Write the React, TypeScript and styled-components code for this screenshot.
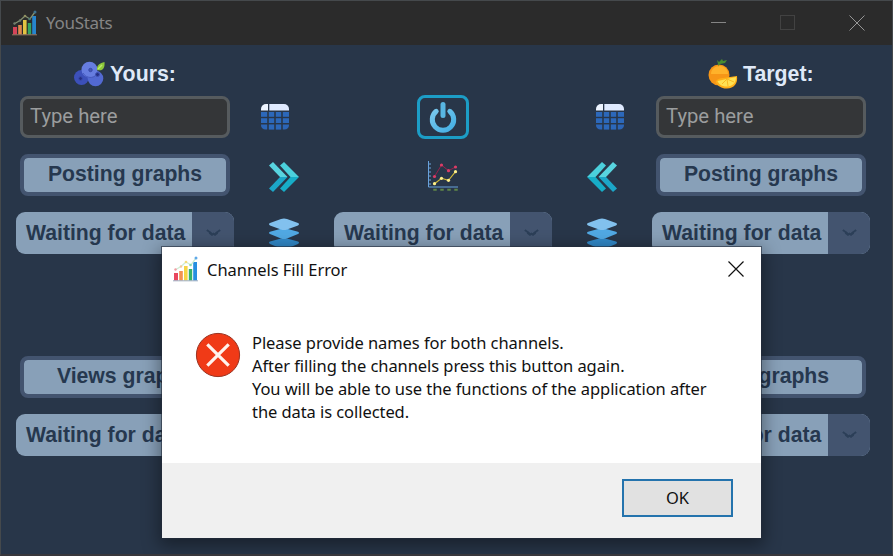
import React from "react";
import styled, { createGlobalStyle } from "styled-components";

const GlobalStyle = createGlobalStyle`
  * { box-sizing: border-box; }
  body { margin: 0; background: #283649; overflow: hidden; }
`;

const Window = styled.div`
  position: relative;
  width: 893px;
  height: 556px;
  display: flex;
  flex-direction: column;
  background: #283649;
  border: 1px solid #45494c;
  border-bottom: 2px solid #38373c;
  overflow: hidden;
`;

const TitleBar = styled.header`
  flex: none;
  height: 44px;
  display: flex;
  align-items: center;
  padding-left: 11px;
  background: #2b2b2b;
  color: #858585;
`;

const AppName = styled.span`
  flex: 1;
  margin-left: 9px;
  font: 17px/24px "Noto Sans", sans-serif;
  letter-spacing: -0.3px;
`;

const WindowButtons = styled.div`
  display: flex;
  align-items: center;
  gap: 54px;
  padding-right: 27px;
  line-height: 0;
`;

const Board = styled.main`
  display: grid;
  grid-template-columns: 218px 100px 218px 100px 218px;
  grid-template-rows: 35px 42px 42px 42px 70px 42px 42px;
  row-gap: 16px;
  padding: 0 0 0 15px;
`;

const Heading = styled.h2<{ $shift: number }>`
  margin: 11px 0 -8px;
  height: 35px;
  display: flex;
  align-items: center;
  padding-left: ${(p) => p.$shift}px;
  gap: 5px;
  color: #dfe9f8;
  font: bold 21.3px/30px "Liberation Sans", Arial, sans-serif;
`;

const NameInput = styled.input`
  width: 210px;
  height: 42px;
  margin: 0 4px;
  padding: 0 7px 2px;
  border: 3px solid #565b5e;
  border-radius: 8px;
  background: #343638;
  outline: none;
  font: 20.3px "Roboto", sans-serif;
  &::placeholder { color: #9b9d9e; opacity: 1; }
`;

const GraphButton = styled.button`
  width: 210px;
  height: 42px;
  margin: 0 4px;
  padding: 0 0 2px;
  border: 4px solid #43546f;
  border-radius: 8px;
  background: linear-gradient(#88a0b8, #88a0b8) padding-box, #43546f;
  color: #26384f;
  font: bold 21.2px/32px "Liberation Sans", Arial, sans-serif;
  white-space: nowrap;
`;

const Select = styled.div`
  height: 42px;
  display: flex;
  border-radius: 9px;
  overflow: hidden;
  background: #88a0b8;
  color: #26384f;
`;

const SelectText = styled.span`
  width: 176px;
  padding-left: 10px;
  font: bold 21.2px/41px "Liberation Sans", Arial, sans-serif;
  white-space: nowrap;
`;

const SelectArrow = styled.span`
  flex: 1;
  display: flex;
  align-items: center;
  justify-content: center;
  background: #43546f;
`;

const IconCell = styled.div<{ $before?: number; $after?: number }>`
  display: flex;
  align-items: center;
  justify-content: center;
  padding-left: ${(p) => p.$before ?? 0}px;
  padding-right: ${(p) => p.$after ?? 0}px;
  padding-top: 3px;
`;

const TableCell = styled(IconCell)`
  padding-top: 0;
`;

const LayersCell = styled(IconCell)`
  padding-top: 1px;
`;

const PowerButton = styled.button`
  width: 52px;
  height: 44px;
  margin: -1px auto;
  padding: 0;
  display: flex;
  align-items: center;
  justify-content: center;
  border: 3px solid #1c9dc6;
  border-radius: 8px;
  background: transparent;
`;

const Dialog = styled.section`
  position: absolute;
  left: 161px;
  top: 246px;
  width: 599px;
  height: 291px;
  display: flex;
  flex-direction: column;
  background: #fff;
  box-shadow: 0 0 0 1px rgba(35, 44, 58, 0.6), 0 5px 16px 3px rgba(0, 0, 0, 0.38);
  color: #111;
  font-family: "Noto Sans", sans-serif;
`;

const DialogTitle = styled.div`
  height: 46px;
  display: flex;
  align-items: center;
  padding: 0 17px 3px 11px;
`;

const DialogName = styled.span`
  flex: 1;
  margin: 3px 0 0 9px;
  font-size: 16.5px;
  line-height: 24px;
  letter-spacing: -0.03px;
`;

const DialogBody = styled.div`
  flex: 1;
  display: flex;
  padding: 39px 0 0 33px;
`;

const Message = styled.p`
  margin: -1px 0 0 11px;
  font-size: 16.5px;
  line-height: 23px;
  letter-spacing: -0.07px;
  white-space: nowrap;
`;

const DialogFooter = styled.footer`
  height: 75px;
  padding: 16px 28px;
  display: flex;
  justify-content: flex-end;
  background: #f0f0f0;
`;

const OkButton = styled.button`
  width: 111px;
  height: 38px;
  padding: 0;
  border: 2px solid #2473ad;
  background: #e1e1e1;
  color: #111;
  font: 16.5px/32px "Noto Sans", sans-serif;
`;

const BarsIcon = ({ dim }: { dim?: boolean }) => (
  <svg width="25" height="26" viewBox="0 0 25 26">
    <g opacity={dim ? 0.9 : 1}>
      <rect x="1" y="17" width="4" height="7.5" fill="#e9475f" />
      <rect x="6.200" y="15" width="3.600" height="9.500" fill="#f39252" />
      <rect x="11" y="10" width="3.600" height="14.500" fill="#f6d545" />
      <rect x="15.800" y="13" width="3.400" height="11.500" fill="#35b269" />
      <rect x="20.200" y="6" width="3.800" height="18.500" fill="#268fe0" />
      <path d="M0 24.800h25" stroke={dim ? "#a5826c" : "#9cabc0"} strokeWidth="1" />
      <path d="M2 14 8 10.500 13 6l5 3 5-7" fill="none" stroke={dim ? "#8f9d78" : "#cdeed4"} strokeWidth="1.300" />
      <circle cx="2.500" cy="13.500" r="1.200" fill={dim ? "#778675" : "#f29ba3"} />
      <circle cx="8" cy="10.500" r="1.200" fill={dim ? "#778675" : "#f4c59b"} />
      <circle cx="13" cy="6" r="1.300" fill={dim ? "#9a9a66" : "#f3db7c"} />
      <circle cx="17.500" cy="9" r="1.300" fill={dim ? "#55857c" : "#8ed9ae"} />
      <circle cx="23" cy="2" r="1.500" fill={dim ? "#417a9c" : "#5fa8e8"} />
    </g>
  </svg>
);

const Blueberries = () => (
  <svg width="31" height="26" viewBox="0 0 31 26">
    <circle cx="7.500" cy="16.500" r="7.500" fill="#3c50ba" />
    <circle cx="21.500" cy="17.500" r="7.800" fill="#5269d2" />
    <circle cx="15.500" cy="8.700" r="8" fill="#667de0" />
    <path d="M9 12c2 4 8 6 12 3" fill="none" stroke="#4659bd" strokeWidth="1" />
    <circle cx="6.500" cy="17.500" r="1.900" fill="#242f83" stroke="#3b4db0" />
    <circle cx="16.500" cy="9" r="1.700" fill="#4457b6" stroke="#374aa8" />
    <circle cx="23.500" cy="13.500" r="2" fill="#253086" stroke="#4053b2" />
    <path d="M23 9C22.500 4 26 2 30.500 1c.5 6-1.500 9.500-7.500 8Z" fill="#8cc83b" />
    <path d="m24 8 4-4" stroke="#bcea67" strokeWidth="1.500" />
  </svg>
);

const Orange = () => (
  <svg width="30" height="30" viewBox="0 0 30 30">
    <circle cx="11" cy="16" r="10.500" fill="#f79617" />
    <path d="M3 15c0-5 4-8 9-8 5 0 8 4 8 8" fill="#ffb22a" />
    <path d="M10.500 7 9 1l2 2 3-3 1 2 4-1-2 3-5 1-2 3Z" fill="#498b31" />
    <path d="M7.500 23C9 20 12 19 15 19l14-2c1 8-3 12-10 12.500-5 .3-9-2-11.500-6.500Z" fill="#ffaf18" />
    <path d="m9.500 22 18.500-4c0 6-3 9-9 9.500-5 .2-8-2-9.500-5.500Z" fill="#ffe253" />
    <path d="m19 20-5 5m5-5 1 7m-1-7 7 3" stroke="#f9ba22" strokeWidth="1" />
  </svg>
);

const TableIcon = () => (
  <svg width="28" height="26" viewBox="0 0 28 26">
    <path d="M5 0H7v6.500H0V5a5 5 0 0 1 5-5Z" fill="#edf4ff" />
    <path d="M8.300 0H23a5 5 0 0 1 5 5v1.500H8.300Z" fill="#dfeaff" />
    {[8, 14.2, 20.4].map((y, row) =>
      [0, 7.8, 14.8, 21.8].map((x, col) => {
        const w = col === 0 || col === 3 ? 6.2 : 5.4;
        const h = row === 2 ? 5.2 : 4.8;
        const corner = row === 2 && (col === 0 || col === 3);
        return corner ? (
          <path
            key={`${row}${col}`}
            d={col === 0 ? "M0 20.400H6.200V25.600H4.500A4.500 4.500 0 0 1 0 21Z" : "M28 20.400H21.800V25.600H23.500A4.500 4.500 0 0 0 28 21Z"}
            fill="#2c65b6"
          />
        ) : (
          <rect key={`${row}${col}`} x={x} y={y} width={w} height={h} fill="#2c68ba" />
        );
      })
    )}
  </svg>
);

const Chevrons = ({ left }: { left?: boolean }) => (
  <svg width="30" height="30" viewBox="0 0 30 30">
    <g transform={left ? "translate(30 0) scale(-1 1)" : undefined}>
      <path d="M0 3.500 4 0 18.500 15H11Z" fill="#58d4df" />
      <path d="M11 15h7.500L4 30 0 26.500Z" fill="#1ca6c8" />
      <path d="M11 3.500 15 0 30 15H21.500Z" fill="#4bd0dc" />
      <path d="M21.500 15H30L15 30l-4-3.500Z" fill="#17adc7" />
    </g>
  </svg>
);

const Layers = () => (
  <svg width="30" height="32" viewBox="0 0 30 32">
    <path d="m1 23.500 11-3h6l11 3q2 1.200 0 2.400L18 30.500q-3 1-6 0L1 25.900q-2-1.200 0-2.400Z" fill="#3188c7" />
    <path d="m1 13.700 11-3h6l11 3q2 1.200 0 2.400l-11 4.400q-3 1-6 0L1 16.100q-2-1.200 0-2.400Z" fill="#51a9e4" />
    <path d="M1 5 12 1q3-1 6 0l11 4q2 1.200 0 2.400l-11 4q-3 1-6 0l-11-4Q-1 6.200 1 5Z" fill="#82c1ee" />
  </svg>
);

const Power = () => (
  <svg width="28" height="32" viewBox="0 0 28 32">
    <defs>
      <linearGradient id="power" x1="0" y1="0" x2="1" y2="1">
        <stop stopColor="#78c8ee" />
        <stop offset="1" stopColor="#43afe4" />
      </linearGradient>
    </defs>
    <path d="M7.200 10.300A10.700 10.700 0 1 0 20.800 10.300" fill="none" stroke="url(#power)" strokeWidth="5" strokeLinecap="round" />
    <rect x="11.500" y="1" width="5" height="16" rx="2.500" fill="#58b6e2" />
  </svg>
);

const RED = [[6.5, 15.5], [13.5, 4], [20.5, 9.7], [27.5, 6]];
const YELLOW = [[6.5, 22.7], [13.5, 17.3], [20.5, 19.3], [27.5, 10.7]];

const LineChart = () => (
  <svg width="31" height="31" viewBox="0 0 31 31">
    <path d="M.5 0v26H30M1 3h2M1 7h2M1 11h2M1 15h2M1 19h2M1 23h2" fill="none" stroke="#69a2dc" strokeWidth="1" />
    <path d="M5.500 28.800h3m4 0h3m4 0h3m4 0h3" stroke="#76a848" strokeWidth="2" strokeDasharray="1.200 .6" />
    <polyline points={RED.join(" ")} fill="none" stroke="#98214b" strokeWidth="1" />
    <polyline points={YELLOW.join(" ")} fill="none" stroke="#cfb93a" strokeWidth="1.100" />
    {RED.map(([x, y]) => <circle key={x} cx={x} cy={y} r="1.600" fill="#db3d66" />)}
    {YELLOW.map(([x, y]) => <circle key={x} cx={x} cy={y} r="1.600" fill="#fff08a" />)}
  </svg>
);

const ErrorIcon = () => (
  <svg width="46" height="46" viewBox="0 0 46 46">
    <circle cx="23" cy="23" r="21.600" fill="#f03a17" stroke="#9b3321" strokeWidth="1" />
    <path d="m12.300 12.300 21.400 21.400m0-21.400L12.300 33.700" stroke="#fff3ee" strokeWidth="3.200" />
  </svg>
);

const Cross = ({ color, width = 1 }: { color: string; width?: number }) => (
  <svg width="16" height="16" viewBox="0 0 16 16">
    <path d="m.5.5 15 15m0-15-15 15" stroke={color} strokeWidth={width} />
  </svg>
);

const WaitingSelect = () => (
  <Select>
    <SelectText>Waiting for data</SelectText>
    <SelectArrow>
      <svg width="15" height="8" viewBox="0 0 15 8">
        <path d="m.8 1 4.500 3.200M14.200 1 9.700 4.200" stroke="#2c3f58" strokeWidth="1.800" />
        <path d="m3.500 3.700 2.500 2 1.500-1 1.500 1 2.500-2" fill="none" stroke="#2c3f58" strokeWidth="2.200" />
      </svg>
    </SelectArrow>
  </Select>
);

export default function App() {
  return (
    <Window>
      <GlobalStyle />
      <TitleBar>
        <BarsIcon dim />
        <AppName>YouStats</AppName>
        <WindowButtons>
          <svg width="15" height="16"><path d="M0 7.500h15" stroke="#858585" /></svg>
          <svg width="15" height="16"><rect x=".5" y=".5" width="14" height="14" fill="none" stroke="#424242" /></svg>
          <Cross color="#969696" />
        </WindowButtons>
      </TitleBar>

      <Board>
        <Heading $shift={58}><Blueberries />Yours:</Heading>
        <span /><span /><span />
        <Heading $shift={56}><Orange />Target:</Heading>

        <NameInput placeholder="Type here" />
        <TableCell $after={18}><TableIcon /></TableCell>
        <PowerButton><Power /></PowerButton>
        <TableCell $before={16}><TableIcon /></TableCell>
        <NameInput placeholder="Type here" />

        <GraphButton>Posting graphs</GraphButton>
        <IconCell><Chevrons /></IconCell>
        <IconCell><LineChart /></IconCell>
        <IconCell><Chevrons left /></IconCell>
        <GraphButton>Posting graphs</GraphButton>

        <WaitingSelect />
        <LayersCell><Layers /></LayersCell>
        <WaitingSelect />
        <LayersCell><Layers /></LayersCell>
        <WaitingSelect />

        <span /><span /><span /><span /><span />

        <GraphButton>Views graphs</GraphButton>
        <span /><span /><span />
        <GraphButton>Views graphs</GraphButton>

        <WaitingSelect />
        <span /><span /><span />
        <WaitingSelect />
      </Board>

      <Dialog>
        <DialogTitle>
          <BarsIcon />
          <DialogName>Channels Fill Error</DialogName>
          <Cross color="#111" width={1.2} />
        </DialogTitle>
        <DialogBody>
          <ErrorIcon />
          <Message>
            Please provide names for both channels.<br />
            After filling the channels press this button again.<br />
            You will be able to use the functions of the application after<br />
            the data is collected.
          </Message>
        </DialogBody>
        <DialogFooter><OkButton>OK</OkButton></DialogFooter>
      </Dialog>
    </Window>
  );
}
